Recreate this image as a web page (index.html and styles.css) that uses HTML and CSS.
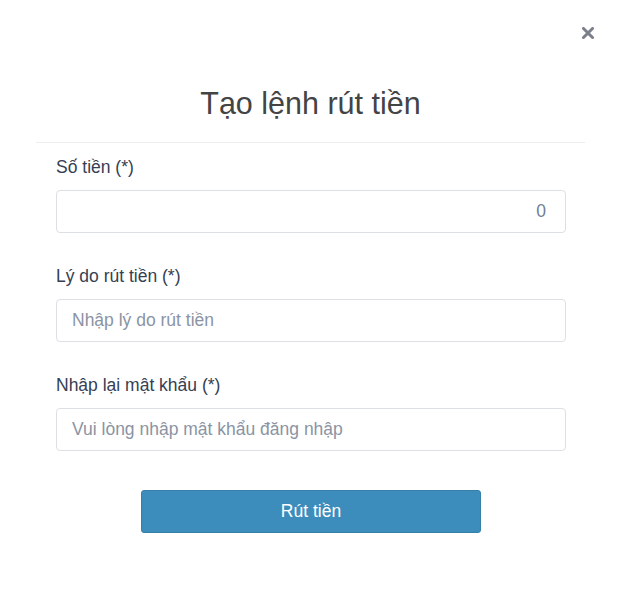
FILE: index.html
```html
<!DOCTYPE html>
<html lang="vi">
<head>
<meta charset="utf-8">
<title>Tạo lệnh rút tiền</title>
<link rel="stylesheet" href="styles.css">
</head>
<body>
<div class="modal">
  <button class="close" aria-label="Đóng">
    <svg width="12" height="12" viewBox="0 0 12 12"><path d="M1.5 1.5 L10.5 10.5 M10.5 1.5 L1.5 10.5" stroke="#7b7f8a" stroke-width="3" stroke-linecap="round"/></svg>
  </button>
  <div class="header">
    <h1 class="title">Tạo lệnh rút tiền</h1>
  </div>
  <form class="form">
    <div class="field">
      <label class="label">Số tiền (*)</label>
      <input class="input input-right" type="text" value="0">
    </div>
    <div class="field">
      <label class="label">Lý do rút tiền (*)</label>
      <input class="input" type="text" placeholder="Nhập lý do rút tiền">
    </div>
    <div class="field">
      <label class="label">Nhập lại mật khẩu (*)</label>
      <input class="input" type="password" placeholder="Vui lòng nhập mật khẩu đăng nhập">
    </div>
    <div class="actions">
      <button type="button" class="btn">Rút tiền</button>
    </div>
  </form>
</div>
</body>
</html>
```
FILE: styles.css
```css
html, body {
  margin: 0;
  padding: 0;
  background: #fff;
}
body {
  font-family: "Liberation Sans", Arial, sans-serif;
}
.modal {
  position: relative;
  width: 620px;
  height: 593px;
  box-sizing: border-box;
}
.close {
  position: absolute;
  top: 27px;
  right: 26px;
  border: 0;
  background: none;
  padding: 0;
  width: 12px;
  height: 12px;
  display: flex;
}
.header {
  margin: 0 35px 0 36px;
  height: 143px;
  border-bottom: 1px solid #eeeeee;
  box-sizing: border-box;
  padding-top: 85px;
}
.title {
  margin: 0;
  text-align: center;
  font-weight: normal;
  font-size: 30.5px;
  line-height: 36px;
  color: #444;
}
.form {
  padding: 12px 54px 0 56px;
  display: flex;
  flex-direction: column;
}
.field {
  display: flex;
  flex-direction: column;
  gap: 11px;
  margin-bottom: 31px;
}
.label {
  font-size: 17.5px;
  line-height: 24px;
  color: #354052;
}
.input {
  height: 43px;
  box-sizing: border-box;
  border: 1px solid #dcdfe4;
  border-radius: 4px;
  padding: 0 15px;
  font-family: "Liberation Sans", Arial, sans-serif;
  font-size: 17.5px;
  color: #718096;
  outline: none;
}
.input::placeholder {
  color: #8a94a3;
}
.input-right {
  text-align: right;
  padding-right: 19px;
}
.actions {
  display: flex;
  justify-content: center;
  padding-top: 8px;
}
.btn {
  width: 340px;
  height: 43px;
  border: 1px solid #367fa9;
  border-radius: 3px;
  background: #3c8dbc;
  color: #fff;
  font-family: "Liberation Sans", Arial, sans-serif;
  font-size: 17.5px;
}
```
